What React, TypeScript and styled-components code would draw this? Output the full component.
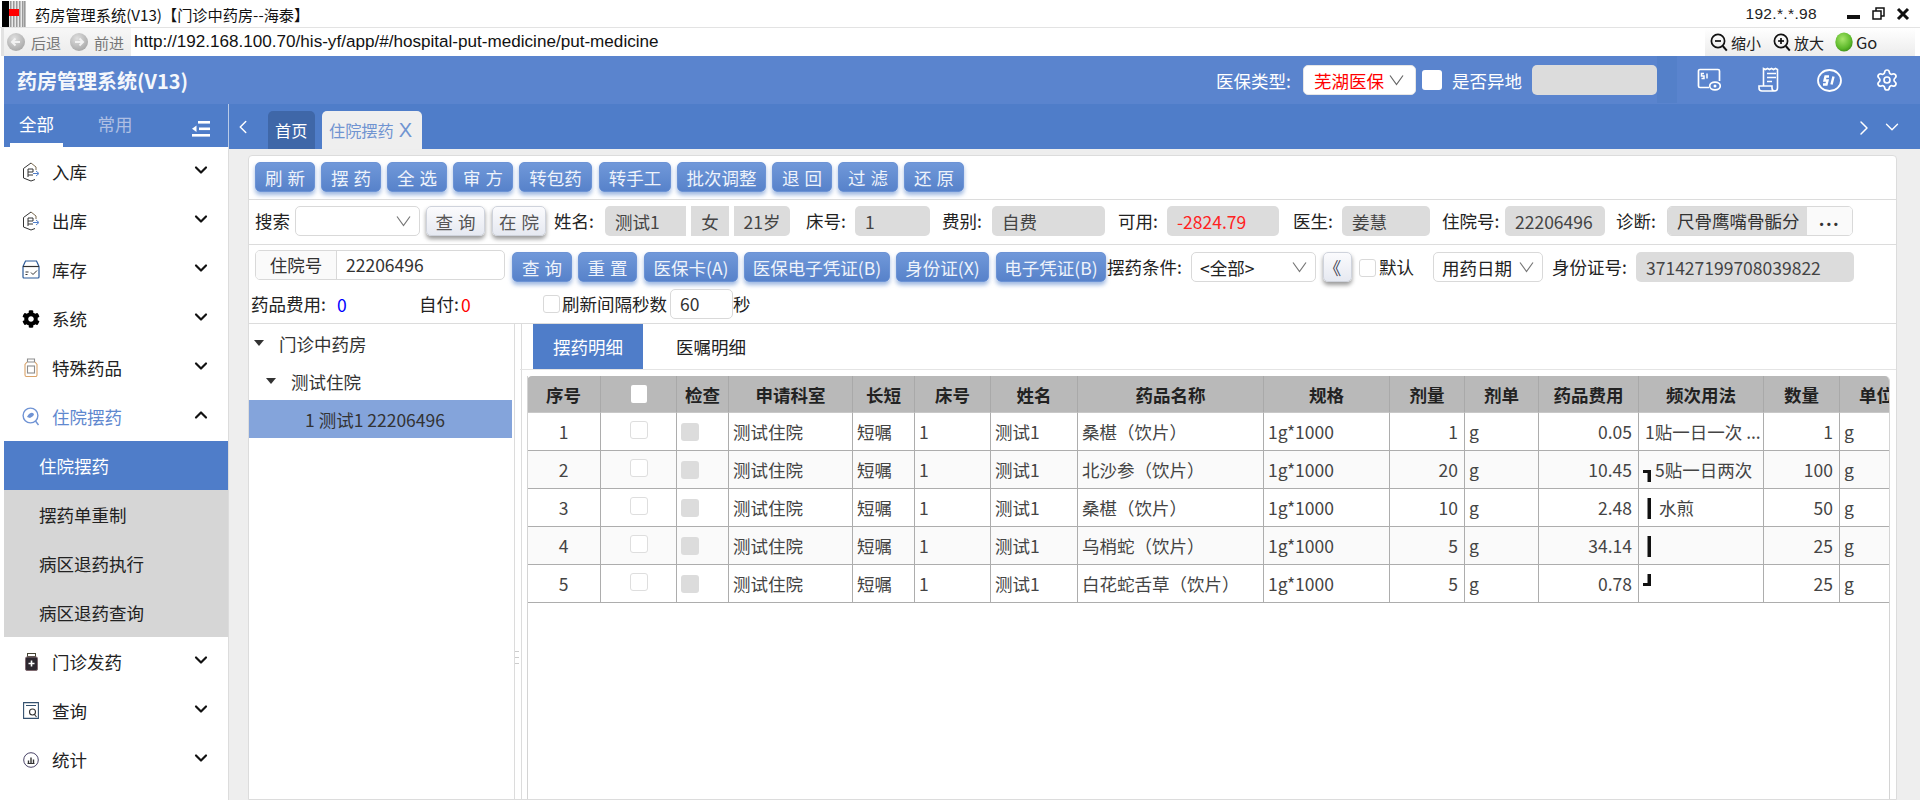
import React from 'react';
import styled, { createGlobalStyle } from 'styled-components';
import { ChevronDown, ChevronUp, ChevronLeft, ChevronRight, Settings } from 'lucide-react';
import { FaCog } from 'react-icons/fa';

const FONT = `"Noto Sans CJK SC", "Liberation Sans", sans-serif`;

const Global = createGlobalStyle`
  html, body { margin: 0; padding: 0; background: #fff; overflow: hidden; }
  * { box-sizing: border-box; }
  body { font-family: ${FONT}; font-size: 17.5px; color: #222; }
`;

const Page = styled.div`
  width: 1920px; height: 800px; overflow: hidden;
  display: flex; flex-direction: column; background: #fff;
`;

/* ---- window chrome ---- */
const TitleBar = styled.div`
  height: 28px; display: flex; align-items: center;
  border-bottom: 1px solid #e3e3e3; padding-left: 2px; flex: none;
`;
const TitleText = styled.span`
  font-size: 15.2px; margin-left: 9px; color: #111; line-height: 28px;
`;
const WinInfo = styled.span`
  margin-left: auto; font-family: "Liberation Sans", sans-serif; font-size: 15.5px; color: #222; letter-spacing: .35px;
`;
const WinBtns = styled.div`
  display: flex; align-items: center; gap: 11px; margin-left: 30px; margin-right: 10px;
`;
const AddressBar = styled.div`
  height: 28px; display: flex; align-items: center; flex: none;
  border-left: 3px solid #e2e2e2; margin-left: 1px;
`;
const NavGroup = styled.div`
  width: 127px; height: 100%; display: flex; align-items: center; gap: 5px;
  background: linear-gradient(#f7f7f7, #ececec); padding-left: 2px;
`;
const NavText = styled.span<{ $mr?: number }>`
  font-size: 15px; color: #777; margin-right: ${p => p.$mr ?? 0}px;
`;
const Url = styled.span`
  font-family: "Liberation Sans", sans-serif; font-size: 17.1px; color: #111; margin-left: 3px; white-space: nowrap;
`;
const ZoomGroup = styled.div`
  width: 210px; height: 100%; margin-left: auto; margin-right: 5px; display: flex; align-items: center;
  padding-left: 5px; background: linear-gradient(#fff, #ececec); color: #222;
`;
const ZoomLabel = styled.span<{ $w: number; $fs?: number }>`
  width: ${p => p.$w}px; margin-left: 3px; flex: none; white-space: nowrap; font-size: ${p => p.$fs ?? 15}px;
`;

/* ---- header ---- */
const Header = styled.header`
  height: 48px; flex: none; margin-left: 4px; background: #5a84ce;
  display: flex; align-items: center; color: #fff;
`;
const Brand = styled.div`
  font-size: 20px; font-weight: 700; margin-left: 13px; color: #f4f7fc; white-space: nowrap;
`;
const HeadRight = styled.div`
  margin-left: auto; height: 100%; padding-right: 23px; display: flex; align-items: center;
`;
const HeadLabel = styled.span<{ $w: number; $ml?: number }>`
  width: ${p => p.$w}px; margin-left: ${p => p.$ml ?? 0}px; flex: none; white-space: nowrap; font-size: 17.5px; color: #fff;
`;
const InsSelect = styled.div`
  width: 113px; height: 30px; flex: none; background: #fff; border-radius: 5px; color: #f00;
  display: flex; align-items: center; gap: 5px; padding-left: 10px; border: 1px solid #e6e6e6;
`;
const HeadCheck = styled.span`
  width: 20px; height: 20px; flex: none; margin-left: 6px; background: #fff; border-radius: 3px;
`;
const HeadInput = styled.span`
  width: 125px; height: 30px; flex: none; margin-left: 9px; background: #dcdcdc; border-radius: 5px;
`;
const HeadStrip = styled.span`
  width: 20px; height: 47px; align-self: flex-start; flex: none; background: #5480c9;
`;
const HeadIcon = styled.span<{ $ml: number; $w: number }>`
  margin-left: ${p => p.$ml}px; width: ${p => p.$w}px; height: 26px; flex: none; display: flex; align-items: center; justify-content: center;
  svg { flex: none; }
`;

/* ---- main ---- */
const Main = styled.div`
  flex: 1; display: flex; margin-left: 4px; min-height: 0;
`;
const Sidebar = styled.aside`
  width: 225px; flex: none; background: #fff; border-right: 1px solid #dcdcdc;
`;
const SideTabs = styled.div`
  height: 43px; background: #4f7dc9; display: flex;
  border-right: 1px solid #b9cbe8; margin-right: -1px;
`;
const SideTab = styled.div<{ $on?: boolean; $w: number }>`
  width: ${p => p.$w}px; margin-left: ${p => (p.$on ? 6 : 0)}px; height: 43px; text-align: center; line-height: 40px;
  color: ${p => (p.$on ? '#fff' : '#aebfe3')}; border-bottom: ${p => (p.$on ? '4px solid #fff' : 'none')};
`;
const SideToggle = styled.span`
  margin-left: auto; margin-right: 18px; margin-top: 14px; height: 18px;
`;
const MenuItem = styled.div<{ $on?: boolean }>`
  height: 49px; display: flex; align-items: center; padding-left: 18px; padding-right: 17px;
  color: ${p => (p.$on ? '#5f88cf' : '#222')};
`;
const MenuIcon = styled.span`
  width: 18px; height: 20px; display: flex; align-items: center; justify-content: center; flex: none; margin-right: 12px;
`;
const MenuCaret = styled.span`
  margin-left: auto; display: flex; margin-top: -4px; color: #111;
`;
const SubItem = styled.div<{ $on?: boolean }>`
  height: 49px; display: flex; align-items: center; padding-left: 35px;
  background: ${p => (p.$on ? '#4f7dc9' : '#d6d6d6')}; color: ${p => (p.$on ? '#fff' : '#222')};
`;
const Content = styled.div`
  flex: 1; min-width: 0; display: flex; flex-direction: column; background: #eee;
`;
const TabBar = styled.div`
  height: 45px; flex: none; background: #4f7dc9; display: flex; align-items: flex-end; color: #fff;
`;
const TabArrow = styled.span<{ $ml: number }>`
  margin-left: ${p => p.$ml}px; align-self: flex-start; margin-top: 12px; display: flex;
`;
const Tab = styled.div<{ $on?: boolean; $w: number; $ml: number }>`
  width: ${p => p.$w}px; margin-left: ${p => p.$ml}px; height: 38px; border-radius: 5px 5px 0 0;
  background: ${p => (p.$on ? '#efefef' : '#3f67a8')}; color: ${p => (p.$on ? '#7094d1' : '#fff')};
  display: flex; align-items: center; padding-left: 7px; white-space: nowrap; font-size: 16.2px;
`;
const TabClose = styled.span`
  margin-left: 5px; font-family: "Liberation Sans", sans-serif; font-size: 20px;
`;
const Card = styled.div`
  flex: 1; min-height: 0; margin: 6px 23px 0 19px; background: #fff; border: 1px solid #dcdcdc; border-radius: 4px 4px 0 0;
  display: flex; flex-direction: column;
`;
const Row = styled.div<{ $h: number; $pt?: number; $pl?: number; $line?: boolean; $center?: boolean }>`
  height: ${p => p.$h}px; flex: none; display: flex; align-items: ${p => (p.$center ? 'center' : 'flex-start')};
  padding-top: ${p => p.$pt ?? 0}px; padding-left: ${p => p.$pl ?? 6}px;
  border-bottom: ${p => (p.$line ? '1px solid #dcdcdc' : 'none')};
`;
const Btn = styled.button<{ $w: number; $ml?: number }>`
  width: ${p => p.$w}px; height: 30px; flex: none; margin-left: ${p => p.$ml ?? 0}px; padding: 0; white-space: nowrap;
  font: inherit; word-spacing: 1px; color: #eef3fb; border: 1px solid #6c93d5; border-radius: 5px;
  background: linear-gradient(#7098d9, #5782ca);
  box-shadow: 0 3px 4px rgba(79, 125, 201, .55);
`;
const LightBtn = styled(Btn)`
  color: #555; border-color: #cfd3dc;
  background: linear-gradient(#fbfbfd, #e6e9f1);
  box-shadow: 0 3px 4px rgba(0, 0, 0, .4);
  display: flex; align-items: center; justify-content: center;
`;
const DoubleAngle = styled.span`
  display: inline-block; margin-right: 10px; color: #445;
`;
const Label = styled.span<{ $w: number; $ml?: number }>`
  width: ${p => p.$w}px; margin-left: ${p => p.$ml ?? 0}px; flex: none; height: 30px; line-height: 30px; white-space: nowrap; color: #222;
`;
const Select = styled.div<{ $w: number }>`
  width: ${p => p.$w}px; height: 30px; flex: none; background: #fff; border: 1px solid #d9d9d9; border-radius: 5px;
  display: flex; align-items: center; padding: 0 8px; justify-content: space-between; color: #222; white-space: nowrap;
`;
const ReadBox = styled.div<{ $w: number; $ml?: number; $r?: string; $red?: boolean; $center?: boolean }>`
  width: ${p => p.$w}px; margin-left: ${p => p.$ml ?? 0}px; height: 30px; flex: none; background: #dcdcdc;
  border-radius: ${p => p.$r ?? '5px'}; color: ${p => (p.$red ? '#f22' : '#444')};
  display: flex; align-items: center; padding-left: ${p => (p.$center ? 0 : 10)}px;
  justify-content: ${p => (p.$center ? 'center' : 'flex-start')}; white-space: nowrap;
`;
const DiagBox = styled.div`
  width: 186px; height: 30px; flex: none; display: flex; border: 1px solid #d9d9d9; border-radius: 5px; overflow: hidden;
`;
const DiagText = styled.span`
  width: 139px; background: #dcdcdc; padding-left: 9px; line-height: 28px; color: #333; white-space: nowrap;
`;
const DiagMore = styled.span`
  flex: 1; background: #fafafa; text-align: center; line-height: 24px; color: #333; font-weight: 700; letter-spacing: 1.5px;
`;
const InputGroup = styled.div`
  width: 250px; height: 30px; margin-top: -2px; flex: none; display: flex; border: 1px solid #d9d9d9; border-radius: 5px; overflow: hidden;
`;
const Addon = styled.span`
  width: 81px; background: #fafafa; border-right: 1px solid #d9d9d9; text-align: center; line-height: 28px; color: #333;
`;
const InputVal = styled.span`
  padding-left: 9px; line-height: 28px; color: #333;
`;
const Check = styled.span<{ $ml?: number; $mt?: number }>`
  width: 17px; height: 18px; flex: none; margin-left: ${p => p.$ml ?? 0}px; margin-top: ${p => p.$mt ?? 0}px;
  background: #fff; border: 1px solid #d9d9d9; border-radius: 3px;
`;
const Num = styled.span<{ $w: number; $color: string }>`
  width: ${p => p.$w}px; flex: none; color: ${p => p.$color};
`;
const SmallInput = styled.span`
  width: 63px; height: 30px; flex: none; border: 1px solid #d9d9d9; border-radius: 5px; padding-left: 9px; line-height: 28px; color: #333;
`;
const Lower = styled.div`
  flex: 1; min-height: 0; display: flex;
`;
const Tree = styled.div`
  width: 263px; flex: none;
`;
const TreeRow = styled.div<{ $pl: number; $on?: boolean }>`
  height: 38px; display: flex; align-items: center; padding-left: ${p => p.$pl}px; color: #333;
  background: ${p => (p.$on ? '#84a4db' : 'transparent')};
`;
const TreeCaret = styled.span`
  width: 0; height: 0; border-left: 5.5px solid transparent; border-right: 5.5px solid transparent; border-top: 6px solid #333;
  margin-right: 15px; flex: none;
`;
const Splitter = styled.div`
  width: 8px; flex: none; margin-left: 2px; border-left: 1px solid #dcdcdc; border-right: 1px solid #dcdcdc;
  display: flex; align-items: center; justify-content: center; padding-top: 196px;
`;
const Handle = styled.span`
  width: 4px; height: 18px; margin-left: -2px;
  background: repeating-linear-gradient(#ccc 0 1px, transparent 1px 6px);
`;
const RightPane = styled.div`
  flex: 1; min-width: 0; display: flex; flex-direction: column; margin-left: -2px;
`;
const DetailTabs = styled.div`
  height: 46px; flex: none; display: flex; border-bottom: 1px solid #e4e4e4; padding-left: 13px;
`;
const DetailTab = styled.div<{ $on?: boolean }>`
  width: ${p => (p.$on ? '110px' : 'auto')}; margin-left: ${p => (p.$on ? 0 : 33)}px;
  height: 45px; display: flex; align-items: center; justify-content: center;
  background: ${p => (p.$on ? '#4f7dc9' : 'transparent')}; color: ${p => (p.$on ? '#fff' : '#222')};
`;
const TableWrap = styled.div`
  flex: 1; margin: 6px 6px 0 7px; border-left: 1px solid #d4d4d4; border-right: 1px solid #d4d4d4; border-top-right-radius: 5px; overflow: hidden;
`;
const Table = styled.table`
  width: 1387px; table-layout: fixed; border-collapse: separate; border-spacing: 0; margin-left: -1px;
`;
const Th = styled.th`
  height: 37px; padding: 0; background: #b9b9b9; border-right: 1px solid #a9a9a9; border-bottom: 1px solid #c8c8c8;
  font-weight: 700; color: #222; text-align: center; white-space: nowrap; overflow: hidden;
  &:first-child { border-top-left-radius: 5px; }
`;
const Tr = styled.tr`
  &:nth-child(even) td { background: #fafafa; }
`;
const Td = styled.td<{ $align?: string }>`
  height: 38px; padding: 0 ${p => (p.$align === 'right' ? 6 : 4)}px 0 4px; border-right: 1px solid #adadad; border-bottom: 1px solid #adadad;
  color: #444; white-space: nowrap; overflow: hidden; text-align: ${p => p.$align ?? 'left'};
`;
const CellCheck = styled.span`
  display: inline-block; vertical-align: middle; width: 18px; height: 18px; margin-top: -8px; background: #fff; border: 1px solid #dedede; border-radius: 3px;
`;
const CellGray = styled.span`
  display: block; width: 18px; height: 18px; background: #dcdcdc; border-radius: 3px;
`;
const HeadBox = styled.span`
  display: inline-block; width: 16px; height: 18px; background: #fff; border-radius: 2px; vertical-align: middle; margin-top: -6px;
`;
const Freq = styled.div`
  display: flex; align-items: center; height: 37px;
`;
const FreqText = styled.span<{ $ml: number }>`
  margin-left: ${p => p.$ml}px;
`;

/* ---- drawings ---- */
const Logo = () => (
  <svg width="24" height="26" viewBox="0 0 24 26" style={{ flex: 'none' }}>
    <rect width="24" height="26" fill="#e9e9e9" />
    {[8, 11, 14, 17, 20, 22].map(x => <rect key={x} x={x} y="0" width="1.5" height="26" fill="#9a9a9a" />)}
    <rect width="7" height="26" fill="#000" />
    <rect x="7" y="8" width="10" height="7" fill="#f00" />
  </svg>
);
const NavCircle = ({ dir }: { dir: 'l' | 'r' }) => (
  <svg width="20" height="20" viewBox="0 0 20 20" style={{ flex: 'none' }}>
    <defs>
      <radialGradient id={`nav${dir}`} cx=".4" cy=".3" r=".8">
        <stop offset="0" stopColor="#e0e0e0" /><stop offset="1" stopColor="#a2a2a2" />
      </radialGradient>
    </defs>
    <circle cx="10" cy="10" r="9" fill={`url(#nav${dir})`} />
    <path d={dir === 'l' ? 'M14 10H6M9.5 6.5 6 10l3.5 3.5' : 'M6 10h8M10.5 6.5 14 10l-3.5 3.5'} stroke="#f2f2f2" strokeWidth="2" fill="none" />
  </svg>
);
const Mag = ({ plus }: { plus?: boolean }) => (
  <svg width="18" height="19" viewBox="0 0 18 19" style={{ flex: 'none' }} fill="none" stroke="#111" strokeWidth="1.7">
    <circle cx="8" cy="8" r="6.6" />
    <path d="M12.8 13l4 4.6" strokeWidth="2" />
    <path d="M5 8h6" />
    {plus && <path d="M8 5v6" />}
  </svg>
);
const GreenBall = () => (
  <svg width="18" height="20" viewBox="0 0 18 20" style={{ flex: 'none', marginLeft: 4 }}>
    <defs>
      <radialGradient id="gb" cx=".42" cy=".35" r=".7">
        <stop offset="0" stopColor="#a7e66a" /><stop offset=".7" stopColor="#5cb82a" /><stop offset="1" stopColor="#3b8a18" />
      </radialGradient>
    </defs>
    <ellipse cx="9" cy="10" rx="8.7" ry="9.6" fill="url(#gb)" />
  </svg>
);
const Caret = ({ c = '#777', w = 15 }: { c?: string; w?: number }) => (
  <svg width={w} height="12" viewBox="0 0 15 12" style={{ flex: 'none' }}>
    <path d="M1 1.5 7.5 10.5 14 1.5" fill="none" stroke={c} strokeWidth="1.2" />
  </svg>
);
const SiCard = () => (
  <svg width="24" height="24" viewBox="0 0 24 24" fill="none" stroke="#fff" strokeWidth="1.7">
    <path d="M12 19.5H3a1.5 1.5 0 0 1-1.5-1.5V3A1.5 1.5 0 0 1 3 1.5h18A1.5 1.5 0 0 1 22.5 3v10" />
    <path d="M7 5.5H4.500v2.500H7v2.500H4.500M10 5.500v5" strokeWidth="1.5" />
    <ellipse cx="18" cy="18" rx="5.3" ry="3.8" />
    <circle cx="18" cy="18" r="1.5" fill="#fff" stroke="none" />
  </svg>
);
const Receipt = () => (
  <svg width="22" height="26" viewBox="0 0 22 26" fill="none" stroke="#fff" strokeWidth="1.6">
    <path d="M5.500 19V1.500l2 1 2-1 2 1 2-1 2 1 2-1 2 1V21a3 3 0 0 1-3 3H4a3 3 0 0 1-3-3v-2h13v2a3 3 0 0 0 3 3" />
    <path d="M9 6.500h9M9 10.500h9M9 14.500h5" strokeWidth="1.7" />
  </svg>
);
const SiRing = () => (
  <svg width="25" height="25" viewBox="0 0 25 25" fill="none" stroke="#fff">
    <ellipse cx="12.500" cy="12.500" rx="11.500" ry="10.500" strokeWidth="1.8" />
    <path d="M12 8.500H8.500L7.500 12.500h3l-1 4H6M16.500 8.500l-2 8" strokeWidth="2.4" />
  </svg>
);
const Toggle = () => (
  <svg width="18" height="18" viewBox="0 0 18 18" fill="#fff">
    <rect x="6" y="1" width="12" height="2.6" />
    <rect x="7" y="7.5" width="11" height="2.6" />
    <rect x="0" y="14" width="18" height="2.6" />
    <path d="M0 8.800 4.500 5.500v6.500z" />
  </svg>
);
const HouseIcon = () => (
  <svg width="18" height="20" viewBox="0 0 18 20" fill="none" stroke="#333" strokeWidth="1">
    <path d="M9 1 1.500 6.500V16L9 19l4-1.500" />
    <path d="M9 1l5 4v3" stroke="#7a6a50" />
    <path d="M6 7h5v3H6zM6 10v5M6 13h5" />
    <path d="M11 11.500h5M14 9l3 2.500-3 2.500" stroke="#4f7dc9" />
  </svg>
);
const BoxIcon = () => (
  <svg width="18" height="19" viewBox="0 0 18 19" fill="none" stroke="#333" strokeWidth="1.2">
    <path d="M1 6.500 3.500 1h11L17 6.500V17a1 1 0 0 1-1 1H2a1 1 0 0 1-1-1z" stroke="#2a5a9a" />
    <path d="M1 6.500h16" />
    <path d="M3.500 12h3M3.500 14.500h2M9 12.500l2 2 4-4" strokeWidth="1" />
  </svg>
);
const BottleIcon = () => (
  <svg width="16" height="20" viewBox="0 0 16 20" fill="none" stroke="#8d8d8d" strokeWidth="1.1">
    <path d="M4.500 1h7v3h-7z" />
    <path d="M4 4 2 6.500V17a1.500 1.500 0 0 0 1.500 1.500h9A1.500 1.500 0 0 0 14 17V6.500L12 4" stroke="#d9a36a" />
    <rect x="4.500" y="8" width="7" height="7" />
  </svg>
);
const ScopeIcon = () => (
  <svg width="18" height="19" viewBox="0 0 18 19" fill="none" stroke="#6f93d4" strokeWidth="1.4">
    <circle cx="8.500" cy="8.500" r="7.400" />
    <path d="M13.500 14l3 4" />
    <path d="M5 10c2-4 5-5 6.500-3.500S10 10 8 11z" fill="#6f93d4" stroke="none" />
  </svg>
);
const PillIcon = () => (
  <svg width="13" height="18" viewBox="0 0 13 18">
    <rect x="2.500" y=".5" width="8" height="3" fill="none" stroke="#443" />
    <rect x=".5" y="4" width="12" height="13.500" rx="1.500" fill="#2d2830" stroke="#806a70" />
    <path d="M6.500 7.500v6M3.500 10.500h6" stroke="#fff" strokeWidth="1.6" />
  </svg>
);
const QueryIcon = () => (
  <svg width="16" height="17" viewBox="0 0 16 17" fill="none" stroke="#33506e" strokeWidth="1.1">
    <path d="M.6.6h14.800v15.800H.6zM3 3.500h10" />
    <circle cx="9.500" cy="10" r="3" stroke="#333" />
    <path d="M11.500 12.500 13.500 15" stroke="#333" />
  </svg>
);
const StatIcon = () => (
  <svg width="16" height="16" viewBox="0 0 16 16" fill="none" stroke="#4a4468">
    <circle cx="8" cy="8" r="7.3" />
    <path d="M4.500 11.500h7" stroke="#333" />
    <path d="M5.500 11V8.500M8 11V5.500M10.500 11V7.500" stroke="#333" strokeWidth="1.4" />
  </svg>
);
type BK = 'top' | 'mid' | 'bot';
const Bracket = ({ kind }: { kind: BK }) => (
  <svg width="9" height="36" viewBox="0 0 9 36" style={{ flex: 'none' }} fill="#111">
    {kind === 'top' && <path d="M0 18h8v12H4.500v-9H0z" />}
    {kind === 'mid' && <rect x="4.500" y="8" width="3.500" height="21" />}
    {kind === 'bot' && <path d="M4.500 8H8v12H0v-3h4.500z" />}
  </svg>
);

/* ---- data ---- */
const COLS = [74, 76, 52, 124, 62, 76, 87, 186, 126, 75, 74, 100, 125, 76, 74];
const HEADS = ['序号', '', '检查', '申请科室', '长短', '床号', '姓名', '药品名称', '规格', '剂量', '剂单', '药品费用', '频次用法', '数量', '单位'];
type Rec = { drug: string; dose: string; fee: string; qty: string; text?: string; ml?: number; br?: BK };
const ROWS: Rec[] = [
  { drug: '桑椹（饮片）', dose: '1', fee: '0.05', qty: '1', text: '1贴一日一次 ...', ml: 2 },
  { drug: '北沙参（饮片）', dose: '20', fee: '10.45', qty: '100', text: '5贴一日两次', ml: 3, br: 'top' },
  { drug: '桑椹（饮片）', dose: '10', fee: '2.48', qty: '50', text: '水煎', ml: 7, br: 'mid' },
  { drug: '乌梢蛇（饮片）', dose: '5', fee: '34.14', qty: '25', br: 'mid' },
  { drug: '白花蛇舌草（饮片）', dose: '5', fee: '0.78', qty: '25', br: 'bot' },
];
const TOP_BTNS: [string, number, number][] = [
  ['刷 新', 60, 0], ['摆 药', 60, 6], ['全 选', 60, 6], ['审 方', 60, 6], ['转包药', 73, 6], ['转手工', 72, 7],
  ['批次调整', 89, 6], ['退 回', 60, 6], ['过 滤', 60, 6], ['还 原', 60, 6],
];
const MENU_TOP: [React.ReactNode, string][] = [
  [<HouseIcon />, '入库'], [<HouseIcon />, '出库'], [<BoxIcon />, '库存'], [<FaCog size={18} color="#000" />, '系统'], [<BottleIcon />, '特殊药品'],
];
const MENU_BOTTOM: [React.ReactNode, string][] = [[<PillIcon />, '门诊发药'], [<QueryIcon />, '查询'], [<StatIcon />, '统计']];

export default function App() {
  return (
    <Page>
      <Global />
      <TitleBar>
        <Logo />
        <TitleText>药房管理系统(V13)【门诊中药房--海泰】</TitleText>
        <WinInfo>192.*.*.98</WinInfo>
        <WinBtns>
          <svg width="14" height="14" viewBox="0 0 14 14"><rect x="0" y="8" width="13" height="4" fill="#111" /></svg>
          <svg width="13" height="14" viewBox="0 0 13 14" fill="none" stroke="#111" strokeWidth="1.5"><rect x="1" y="4" width="8" height="8" /><path d="M4 4V1h8v8H9" /></svg>
          <svg width="14" height="14" viewBox="0 0 14 14" fill="none" stroke="#111" strokeWidth="3"><path d="M2 2l10 10M12 2 2 12" /></svg>
        </WinBtns>
      </TitleBar>
      <AddressBar>
        <NavGroup>
          <NavCircle dir="l" /><NavText $mr={3}>后退</NavText>
          <NavCircle dir="r" /><NavText>前进</NavText>
        </NavGroup>
        <Url>http://192.168.100.70/his-yf/app/#/hospital-put-medicine/put-medicine</Url>
        <ZoomGroup>
          <Mag /><ZoomLabel $w={42}>缩小</ZoomLabel>
          <Mag plus /><ZoomLabel $w={37}>放大</ZoomLabel>
          <GreenBall /><ZoomLabel $w={24} $fs={16.5}>Go</ZoomLabel>
        </ZoomGroup>
      </AddressBar>
      <Header>
        <Brand>药房管理系统(V13)</Brand>
        <HeadRight>
          <HeadLabel $w={87}>医保类型:</HeadLabel>
          <InsSelect>芜湖医保<Caret c="#666" /></InsSelect>
          <HeadCheck />
          <HeadLabel $w={71} $ml={10}>是否异地</HeadLabel>
          <HeadInput />
          <HeadStrip />
          <HeadIcon $ml={20} $w={24}><SiCard /></HeadIcon>
          <HeadIcon $ml={37} $w={22}><Receipt /></HeadIcon>
          <HeadIcon $ml={37} $w={25}><SiRing /></HeadIcon>
          <HeadIcon $ml={35} $w={20}><Settings size={24} color="#fff" strokeWidth={1.7} /></HeadIcon>
        </HeadRight>
      </Header>
      <Main>
        <Sidebar>
          <SideTabs>
            <SideTab $on $w={53}>全部</SideTab>
            <SideTab $w={104}>常用</SideTab>
            <SideToggle><Toggle /></SideToggle>
          </SideTabs>
          {MENU_TOP.map(([ic, t]) => (
            <MenuItem key={t}>
              <MenuIcon>{ic}</MenuIcon>{t}
              <MenuCaret><ChevronDown size={20} strokeWidth={2.6} /></MenuCaret>
            </MenuItem>
          ))}
          <MenuItem $on>
            <MenuIcon><ScopeIcon /></MenuIcon>住院摆药
            <MenuCaret><ChevronUp size={20} strokeWidth={2.6} /></MenuCaret>
          </MenuItem>
          <SubItem $on>住院摆药</SubItem>
          <SubItem>摆药单重制</SubItem>
          <SubItem>病区退药执行</SubItem>
          <SubItem>病区退药查询</SubItem>
          {MENU_BOTTOM.map(([ic, t]) => (
            <MenuItem key={t}>
              <MenuIcon>{ic}</MenuIcon>{t}
              <MenuCaret><ChevronDown size={20} strokeWidth={2.6} /></MenuCaret>
            </MenuItem>
          ))}
        </Sidebar>
        <Content>
          <TabBar>
            <TabArrow $ml={3}><ChevronLeft size={22} color="#fff" strokeWidth={1.6} /></TabArrow>
            <Tab $w={47} $ml={14}>首页</Tab>
            <Tab $on $w={100} $ml={7}>住院摆药<TabClose>X</TabClose></Tab>
            <TabArrow $ml={1430}><ChevronRight size={24} color="#fff" strokeWidth={1.5} /></TabArrow>
            <TabArrow $ml={5}><ChevronDown size={22} color="#fff" strokeWidth={1.5} /></TabArrow>
          </TabBar>
          <Card>
            <Row $h={44} $pt={6} $line>
              {TOP_BTNS.map(([t, w, ml]) => <Btn key={t} $w={w} $ml={ml}>{t}</Btn>)}
            </Row>
            <Row $h={45} $pt={6} $line>
              <Label $w={40}>搜索</Label>
              <Select $w={125}><span /><Caret /></Select>
              <LightBtn $w={59} $ml={6}>查 询</LightBtn>
              <LightBtn $w={54} $ml={7}>在 院</LightBtn>
              <Label $w={51} $ml={8}>姓名:</Label>
              <ReadBox $w={81} $r="5px 0 0 5px">测试1</ReadBox>
              <ReadBox $w={38} $ml={5} $r="0" $center>女</ReadBox>
              <ReadBox $w={56} $ml={5} $r="0 5px 5px 0" $center>21岁</ReadBox>
              <Label $w={49} $ml={16}>床号:</Label>
              <ReadBox $w={75}>1</ReadBox>
              <Label $w={50} $ml={12}>费别:</Label>
              <ReadBox $w={113}>自费</ReadBox>
              <Label $w={49} $ml={13}>可用:</Label>
              <ReadBox $w={112} $red>-2824.79</ReadBox>
              <Label $w={49} $ml={14}>医生:</Label>
              <ReadBox $w={88}>姜慧</ReadBox>
              <Label $w={63} $ml={12}>住院号:</Label>
              <ReadBox $w={100}>22206496</ReadBox>
              <Label $w={51} $ml={11}>诊断:</Label>
              <DiagBox><DiagText>尺骨鹰嘴骨骺分</DiagText><DiagMore>...</DiagMore></DiagBox>
            </Row>
            <Row $h={40} $pt={7}>
              <InputGroup><Addon>住院号</Addon><InputVal>22206496</InputVal></InputGroup>
              <Btn $w={60} $ml={7}>查 询</Btn>
              <Btn $w={59} $ml={6}>重 置</Btn>
              <Btn $w={94} $ml={7}>医保卡(A)</Btn>
              <Btn $w={146} $ml={6}>医保电子凭证(B)</Btn>
              <Btn $w={93} $ml={6}>身份证(X)</Btn>
              <Btn $w={110} $ml={7}>电子凭证(B)</Btn>
              <Label $w={84} $ml={1}>摆药条件:</Label>
              <Select $w={125}>{'<全部>'}<Caret /></Select>
              <LightBtn $w={29} $ml={7}><DoubleAngle>《</DoubleAngle></LightBtn>
              <Check $ml={7} $mt={7} />
              <Label $w={54} $ml={3}>默认</Label>
              <Select $w={110}>用药日期<Caret /></Select>
              <Label $w={84} $ml={9}>身份证号:</Label>
              <ReadBox $w={218}>371427199708039822</ReadBox>
            </Row>
            <Row $h={39} $pl={2} $line $center>
              <Label $w={86}>药品费用:</Label>
              <Num $w={82} $color="#00f">0</Num>
              <Label $w={42}>自付:</Label>
              <Num $w={82} $color="#f00">0</Num>
              <Check />
              <Label $w={108} $ml={2}>刷新间隔秒数</Label>
              <SmallInput>60</SmallInput>
              <Label $w={20}>秒</Label>
            </Row>
            <Lower>
              <Tree>
                <TreeRow $pl={5}><TreeCaret />门诊中药房</TreeRow>
                <TreeRow $pl={17}><TreeCaret />测试住院</TreeRow>
                <TreeRow $pl={56} $on>1 测试1 22206496</TreeRow>
              </Tree>
              <Splitter><Handle /></Splitter>
              <RightPane>
                <DetailTabs>
                  <DetailTab $on>摆药明细</DetailTab>
                  <DetailTab>医嘱明细</DetailTab>
                </DetailTabs>
                <TableWrap>
                  <Table>
                    <colgroup>{COLS.map((w, i) => <col key={i} style={{ width: w }} />)}</colgroup>
                    <thead>
                      <tr>{HEADS.map((h, i) => <Th key={i}>{i === 1 ? <HeadBox /> : h}</Th>)}</tr>
                    </thead>
                    <tbody>
                      {ROWS.map((r, i) => (
                        <Tr key={i}>
                          <Td $align="center">{i + 1}</Td>
                          <Td $align="center"><CellCheck /></Td>
                          <Td><CellGray /></Td>
                          <Td>测试住院</Td>
                          <Td>短嘱</Td>
                          <Td>1</Td>
                          <Td>测试1</Td>
                          <Td>{r.drug}</Td>
                          <Td>1g*1000</Td>
                          <Td $align="right">{r.dose}</Td>
                          <Td>g</Td>
                          <Td $align="right">{r.fee}</Td>
                          <Td>
                            <Freq>
                              {r.br && <Bracket kind={r.br} />}
                              {r.text && <FreqText $ml={r.ml ?? 0}>{r.text}</FreqText>}
                            </Freq>
                          </Td>
                          <Td $align="right">{r.qty}</Td>
                          <Td>g</Td>
                        </Tr>
                      ))}
                    </tbody>
                  </Table>
                </TableWrap>
              </RightPane>
            </Lower>
          </Card>
        </Content>
      </Main>
    </Page>
  );
}
